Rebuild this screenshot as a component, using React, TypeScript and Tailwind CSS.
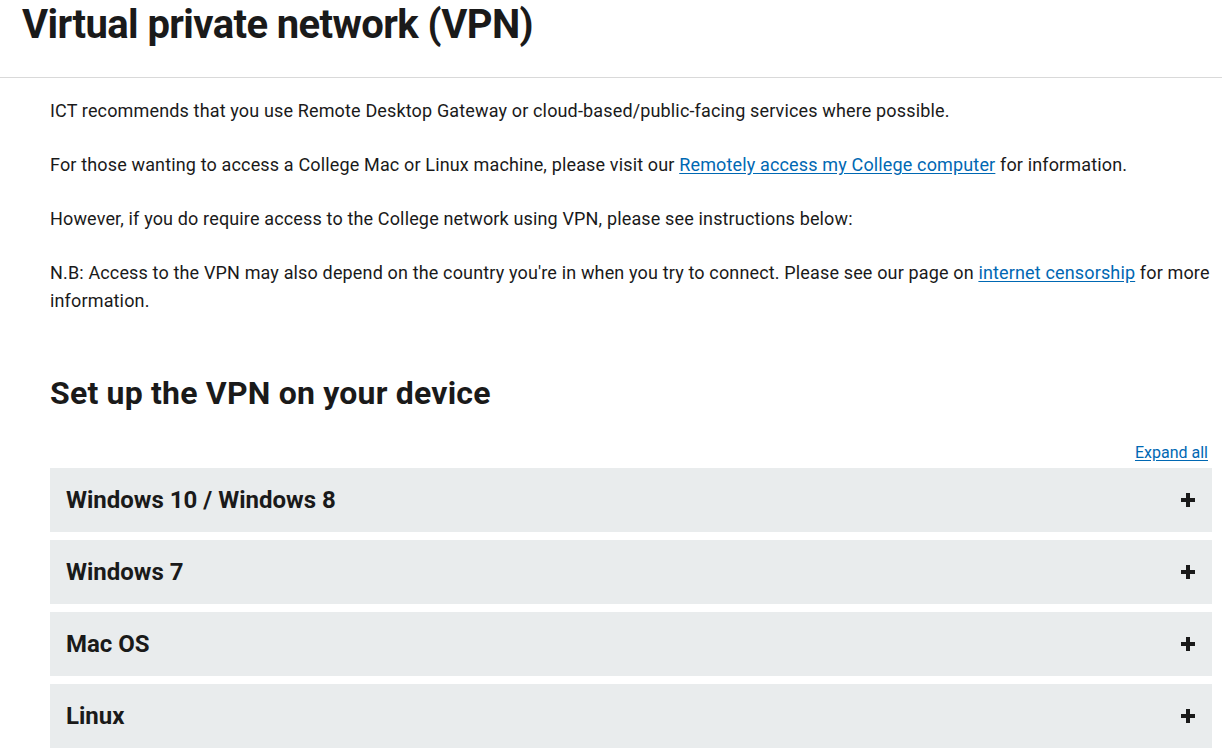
import React from "react";

const sections = ["Windows 10 / Windows 8", "Windows 7", "Mac OS", "Linux"];

function PlusIcon() {
  return (
    <svg width="16" height="16" viewBox="0 0 16 16" aria-hidden="true">
      <path d="M6 1h4v5h5v4h-5v5H6v-5H1V6h5z" fill="#1a1a1a" />
    </svg>
  );
}

export default function App() {
  return (
    <div className="min-h-screen bg-white text-[#1a1a1a] font-['Roboto','Liberation_Sans',sans-serif]">
      <header className="border-b border-[#d9d9d9] pl-[22px] pt-[1px] h-[78px]">
        <h1 className="text-[40px] font-bold leading-[48px] tracking-[-0.6px]">
          Virtual private network (VPN)
        </h1>
      </header>

      <main className="px-[50px] pr-[10px] pt-[19px]">
        <div className="text-[18px] leading-[28px] tracking-[0.15px]">
          <p className="mb-[26px]">
            ICT recommends that you use Remote Desktop Gateway or cloud-based/public-facing services where possible.
          </p>
          <p className="mb-[26px]">
            For those wanting to access a College Mac or Linux machine, please visit our{" "}
            <a href="#" className="text-[#0068b3] underline underline-offset-2">
              Remotely access my College computer
            </a>{" "}
            for information.
          </p>
          <p className="mb-[26px]">
            However, if you do require access to the College network using VPN, please see instructions below:
          </p>
          <p>
            N.B: Access to the VPN may also depend on the country you're in when you try to connect. Please see our page on{" "}
            <a href="#" className="text-[#0068b3] underline underline-offset-2">
              internet censorship
            </a>{" "}
            for more information.
          </p>
        </div>

        <h2 className="mt-[58px] text-[32px] font-bold leading-[40px] tracking-[0.2px]">
          Set up the VPN on your device
        </h2>

        <div className="mt-[30px] flex justify-end pr-[4px]">
          <a href="#" className="text-[16px] leading-[20px] text-[#0068b3] underline underline-offset-2">
            Expand all
          </a>
        </div>

        <div className="mt-[5px] flex flex-col gap-[8px]">
          {sections.map((s) => (
            <button
              key={s}
              className="flex h-[64px] items-center justify-between bg-[#e9eced] pl-[16px] pr-[16px] text-left"
            >
              <span className="text-[24px] font-bold">{s}</span>
              <PlusIcon />
            </button>
          ))}
        </div>
      </main>
    </div>
  );
}
